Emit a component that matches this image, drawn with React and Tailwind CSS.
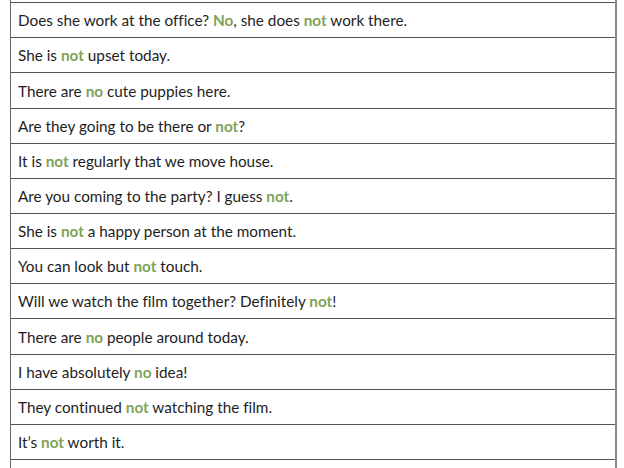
import React from 'react';

const rows = [
  [['Does she work at the office? '], ['No', true], [', she does '], ['not', true], [' work there.']],
  [['She is '], ['not', true], [' upset today.']],
  [['There are '], ['no', true], [' cute puppies here.']],
  [['Are they going to be there or '], ['not', true], ['?']],
  [['It is '], ['not', true], [' regularly that we move house.']],
  [['Are you coming to the party? I guess '], ['not', true], ['.']],
  [['She is '], ['not', true], [' a happy person at the moment.']],
  [['You can look but '], ['not', true], [' touch.']],
  [['Will we watch the film together? Definitely '], ['not', true], ['!']],
  [['There are '], ['no', true], [' people around today.']],
  [['I have absolutely '], ['no', true], [' idea!']],
  [['They continued '], ['not', true], [' watching the film.']],
  [['It\u2019s '], ['not', true], [' worth it.']],
  [['']],
];

const App = () => {
  return (
    <div className="h-[468px] w-[624px] overflow-hidden bg-white" style={{ fontFamily: 'Lato, sans-serif' }}>
      <div className="-mt-[32px] ml-[10px] w-[607px] border-l border-r-2 border-l-[#666] border-r-[#888]">
        <div className="h-[35.15px] border-b border-[#555]" />
        {rows.map((parts, i) => (
          <div
            key={i}
            className="flex h-[35.15px] items-center border-b border-[#555] pl-[7px] pt-px text-[15.3px] text-[#1e1e1e] [font-variant-ligatures:none]"
          >
            {parts.map(([t, hl], j) =>
              hl ? (
                <span key={j} className="font-bold text-[#7ea35a]">{t}</span>
              ) : (
                <span key={j} className="whitespace-pre">{t}</span>
              )
            )}
          </div>
        ))}
      </div>
    </div>
  );
};

export default App;
